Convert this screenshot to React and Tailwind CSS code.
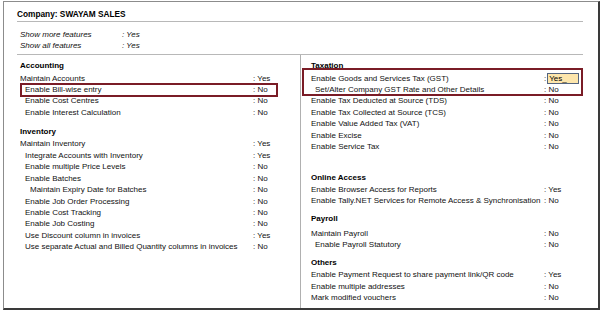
import React from "react";

const LEFT = [
  { h: "Accounting", cls: "mt-[4px] mb-[1px]" },
  { label: "Maintain Accounts", value: "Yes", ind: 0 },
  { label: "Enable Bill-wise entry", value: "No", ind: 1, boxed: true },
  { label: "Enable Cost Centres", value: "No", ind: 1 },
  { label: "Enable Interest Calculation", value: "No", ind: 1 },
  { h: "Inventory", cls: "mt-[7px]" },
  { label: "Maintain Inventory", value: "Yes", ind: 0 },
  { label: "Integrate Accounts with Inventory", value: "Yes", ind: 1 },
  { label: "Enable multiple Price Levels", value: "No", ind: 1 },
  { label: "Enable Batches", value: "No", ind: 1 },
  { label: "Maintain Expiry Date for Batches", value: "No", ind: 2 },
  { label: "Enable Job Order Processing", value: "No", ind: 1 },
  { label: "Enable Cost Tracking", value: "No", ind: 1 },
  { label: "Enable Job Costing", value: "No", ind: 1 },
  { label: "Use Discount column in invoices", value: "Yes", ind: 1 },
  { label: "Use separate Actual and Billed Quantity columns in invoices", value: "No", ind: 1 },
];

const RIGHT_TAX = [
  { label: "Enable Tax Deducted at Source (TDS)", value: "No" },
  { label: "Enable Tax Collected at Source (TCS)", value: "No" },
  { label: "Enable Value Added Tax (VAT)", value: "No" },
  { label: "Enable Excise", value: "No" },
  { label: "Enable Service Tax", value: "No" },
];

const RIGHT_REST = [
  { h: "Online Access", cls: "mt-[18px]" },
  { label: "Enable Browser Access for Reports", value: "Yes" },
  { label: "Enable Tally.NET Services for Remote Access & Synchronisation", value: "No" },
  { h: "Payroll", cls: "mt-[5px] mb-[3px]" },
  { label: "Maintain Payroll", value: "No" },
  { label: "Enable Payroll Statutory", value: "No", ind: 1 },
  { h: "Others", cls: "mt-[6px]" },
  { label: "Enable Payment Request to share payment link/QR code", value: "Yes" },
  { label: "Enable multiple addresses", value: "No" },
  { label: "Mark modified vouchers", value: "No" },
];

const LEFT_IND = ["pl-[3px]", "pl-[8px]", "pl-[13px]"];
const RIGHT_IND = ["pl-[10px]", "pl-[14px]"];

function Heading({ children, className, side }) {
  return (
    <div className={`h-[13px] leading-[13px] font-bold text-black ${side === "left" ? "pl-[3px]" : "pl-[10px]"} ${className || ""}`}>
      {children}
    </div>
  );
}

function Row({ label, value, pad, valueW }) {
  return (
    <div className="flex h-[11.45px] leading-[11.45px] items-center">
      <span className={`flex-1 whitespace-nowrap ${pad}`}>{label}</span>
      <span className={`${valueW} whitespace-nowrap`}>: {value}</span>
    </div>
  );
}

export default function App() {
  return (
    <div className="w-[605px] h-[313px] bg-white text-[8px] text-[#111111] font-['Liberation_Sans',Arial,sans-serif]">
      <div className="ml-[3px] mt-[1px] w-[597px] h-[309px] flex flex-col border-l border-t border-r-2 border-b-2 border-l-[#8c8c8c] border-t-[#8c8c8c] border-r-[#3a3a3a] border-b-[#3a3a3a]">
        <div className="flex-1 flex flex-col pl-[13px] pr-[15px]">
          <div className="pt-[6px] pb-[1px] leading-[12px] font-bold text-[8.3px] text-black border-b border-[#b8b8b8]">
            Company: SWAYAM SALES
          </div>

          <div className="pt-[7px] pb-[2px] italic border-b border-[#b8b8b8]">
            {[["Show more features", "Yes"], ["Show all features", "Yes"]].map(([l, v]) => (
              <div key={l} className="flex h-[11.3px] leading-[11.3px] items-center pl-[3px]">
                <span className="w-[102px]">{l}</span>
                <span>: {v}</span>
              </div>
            ))}
          </div>

          <div className="flex-1 flex">
            {/* left column */}
            <div className="w-[283px]">
              {LEFT.map((r) =>
                r.h ? (
                  <Heading key={r.h} side="left" className={r.cls}>{r.h}</Heading>
                ) : (
                  <div key={r.label} className="relative">
                    <Row label={r.label} value={r.value} pad={LEFT_IND[r.ind]} valueW="w-[47px]" />
                    {r.boxed && <div className="absolute left-[3px] right-[22px] -top-[1px] -bottom-[2px] border-2 border-[#7a1c26]" />}
                  </div>
                )
              )}
            </div>

            {/* right column */}
            <div className="flex-1 border-l border-[#b0b0b0]">
              <Heading side="right" className="mt-[4px] mb-[1px]">Taxation</Heading>
              <div className="relative">
                <div className="flex h-[11.45px] leading-[11.45px] items-center">
                  <span className="flex-1 whitespace-nowrap pl-[10px]">Enable Goods and Services Tax (GST)</span>
                  <span className="w-[39px] flex items-center whitespace-nowrap">
                    :
                    <span className="ml-[1px] w-[32px] h-[11px] leading-[10px] pl-[1px] bg-[#fde6ac] border border-[#55657f] text-black">Yes_</span>
                  </span>
                </div>
                <Row label="Set/Alter Company GST Rate and Other Details" value="No" pad={RIGHT_IND[1]} valueW="w-[39px]" />
                <div className="absolute left-[1px] right-0 -top-[5px] -bottom-[1px] border-2 border-[#7a1c26]" />
              </div>
              {RIGHT_TAX.map((r) => (
                <Row key={r.label} label={r.label} value={r.value} pad={RIGHT_IND[0]} valueW="w-[39px]" />
              ))}
              {RIGHT_REST.map((r) =>
                r.h ? (
                  <Heading key={r.h} side="right" className={r.cls}>{r.h}</Heading>
                ) : (
                  <Row key={r.label} label={r.label} value={r.value} pad={RIGHT_IND[r.ind || 0]} valueW="w-[39px]" />
                )
              )}
            </div>
          </div>
        </div>
      </div>
    </div>
  );
}
